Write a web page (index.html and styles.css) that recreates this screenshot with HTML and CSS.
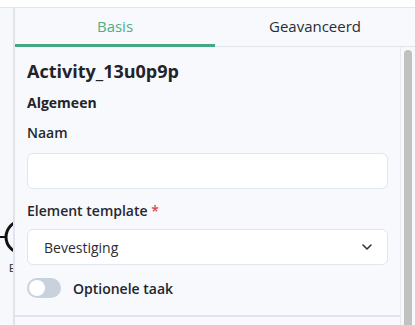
FILE: index.html
```html
<!DOCTYPE html>
<html lang="nl">
<head>
    <meta charset="UTF-8">
    <meta name="viewport" content="width=device-width, initial-scale=1.0">
    <title>Eigenschappen</title>
    <link rel="stylesheet" href="styles.css">
</head>
<body>
    <div class="topbar"></div>
    <div class="workspace">
        <div class="canvas">
            <svg class="shape" width="14" height="62" viewBox="0 0 14 62">
                <circle cx="22" cy="22" r="16" fill="none" stroke="#111" stroke-width="3"/>
                <line x1="0" y1="22" x2="6" y2="22" stroke="#111" stroke-width="2"/>
                <text x="9" y="57" font-size="11" font-family="Liberation Sans, sans-serif" fill="#333">E</text>
            </svg>
        </div>
        <div class="panel">
            <div class="tabs">
                <div class="tab active">Basis</div>
                <div class="tab">Geavanceerd</div>
            </div>
            <div class="body">
                <div class="content">
                    <h1 class="title">Activity_13u0p9p</h1>
                    <h2 class="group">Algemeen</h2>
                    <label class="label">Naam</label>
                    <div class="input"></div>
                    <label class="label">Element template <span class="req">*</span></label>
                    <div class="input select">
                        <span>Bevestiging</span>
                        <svg width="12" height="8" viewBox="0 0 12 8"><path d="M2 2l4 4 4-4" fill="none" stroke="#333" stroke-width="1.6" stroke-linecap="round" stroke-linejoin="round"/></svg>
                    </div>
                    <div class="toggle-row">
                        <span class="toggle"><span class="knob"></span></span>
                        <span class="toggle-label">Optionele taak</span>
                    </div>
                    <div class="divider"></div>
                </div>
                <div class="scrollbar"><div class="thumb"></div></div>
            </div>
        </div>
    </div>
</body>
</html>
```

FILE: styles.css
```css
body {
    margin: 0;
    height: 325px;
    background-color: #ffffff;
    font-family: "Open Sans", "Noto Sans", sans-serif;
    color: #22242a;
    overflow: hidden;
}
.topbar {
    height: 7px;
    background-color: #ffffff;
    border-bottom: 1px solid #e1e5ee;
}
.workspace {
    display: flex;
    height: 317px;
    overflow: hidden;
}
.canvas {
    width: 13px;
    background-color: #f7f8fc;
    position: relative;
    overflow: hidden;
}
.shape {
    position: absolute;
    left: 0;
    top: 207px;
}
.panel {
    flex: 1;
    border-left: 2px solid #dfe4ed;
    background-color: #f7f9fd;
    display: flex;
    flex-direction: column;
}
.tabs {
    display: flex;
    height: 38px;
    border-bottom: 1px solid #dfe4ed;
}
.tab {
    flex: 1;
    text-align: center;
    font-size: 15px;
    line-height: 36px;
    color: #2b2d33;
}
.tab.active {
    color: #4fae88;
    border-bottom: 3px solid #45a783;
    margin-bottom: -1px;
}
.body {
    flex: 1;
    display: flex;
    min-height: 0;
}
.content {
    flex: 1;
    padding: 12px 12px 0 12px;
}
.title {
    margin: 0;
    font-size: 18px;
    line-height: 24px;
    font-weight: 700;
}
.group {
    margin: 10px 0 0 0;
    font-size: 14px;
    line-height: 20px;
    font-weight: 700;
}
.label {
    display: block;
    margin-top: 10px;
    font-size: 14px;
    line-height: 20px;
    font-weight: 600;
    color: #26282e;
}
.req {
    color: #e2444b;
}
.input {
    margin-top: 10px;
    height: 34px;
    background-color: #ffffff;
    border: 1px solid #e0e5ee;
    border-radius: 6px;
}
.label + .input {
    margin-top: 10px;
}
.input + .label {
    margin-top: 12px;
}
.select {
    margin-top: 9px;
    display: flex;
    align-items: center;
    justify-content: space-between;
    padding: 0 14px 0 16px;
    font-size: 14px;
    color: #2b2d33;
}
.label + .select {
    margin-top: 8px;
}
.toggle-row {
    display: flex;
    align-items: center;
    margin-top: 13px;
}
.toggle {
    width: 34px;
    height: 20px;
    border-radius: 10px;
    background-color: #c8d1dc;
    position: relative;
}
.knob {
    position: absolute;
    left: 2px;
    top: 2px;
    width: 16px;
    height: 16px;
    border-radius: 50%;
    background-color: #ffffff;
}
.toggle-label {
    margin-left: 12px;
    font-size: 14px;
    font-weight: 600;
}
.divider {
    margin: 17px -12px 0 -12px;
    height: 2px;
    background-color: #dfe5ee;
}
.scrollbar {
    width: 14px;
    border-left: 1px solid #e6e9ef;
    background-color: #f7f8fa;
    display: flex;
    flex-direction: column;
    align-items: center;
}
.thumb {
    flex: 1;
    margin-top: 3px;
    width: 8px;
    border-radius: 4px 4px 0 0;
    background-color: #c1c1c1;
}
```
